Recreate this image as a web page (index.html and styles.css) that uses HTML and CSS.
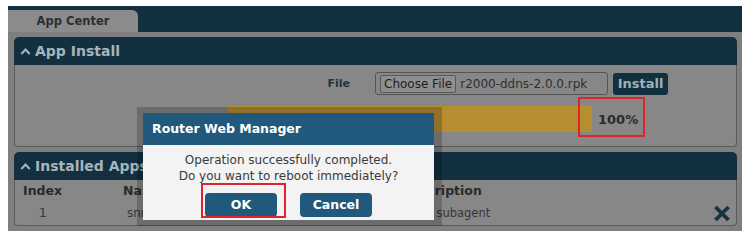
FILE: index.html
```html
<!DOCTYPE html>
<html>
<head>
<meta charset="utf-8">
<link rel="stylesheet" href="styles.css">
</head>
<body>
<div class="page">
  <div class="tabbar"><div class="tab">App Center</div></div>
  <div class="content">
    <section class="panel">
      <div class="panel-head">
        <svg class="chev" width="11" height="7" viewBox="0 0 11 7"><polyline points="1.3,6 5.5,1.6 9.7,6" fill="none" stroke="#a8b4ba" stroke-width="2.2"/></svg>
        <span>App Install</span>
      </div>
      <div class="panel-body install">
        <div class="file-row">
          <span class="file-label">File</span>
          <div class="file-input"><span class="choose">Choose File</span><span class="fname">r2000-ddns-2.0.0.rpk</span></div>
          <span class="btn-install">Install</span>
        </div>
        <div class="progress-row">
          <div class="bar"><div class="fill" style="width:100%"></div></div>
          <span class="pct">100%</span>
        </div>
      </div>
    </section>
    <section class="panel second">
      <div class="panel-head">
        <svg class="chev" width="11" height="7" viewBox="0 0 11 7"><polyline points="1.3,6 5.5,1.6 9.7,6" fill="none" stroke="#a8b4ba" stroke-width="2.2"/></svg>
        <span>Installed Apps</span>
      </div>
      <div class="panel-body apps">
        <div class="apps-table">
          <div class="th c1">Index</div>
          <div class="th c2">Name</div>
          <div class="th c3">Description</div>
          <div class="th c4"></div>
          <div class="td c1 idx">1</div>
          <div class="td c2 nm">snmpd</div>
          <div class="td c3">snmp subagent</div>
          <div class="td c4">
            <svg width="18" height="17" viewBox="0 0 18 17"><path d="M2.5 2 L15.5 15 M15.5 2 L2.5 15" stroke="#17333f" stroke-width="3.8" stroke-linecap="butt"/></svg>
          </div>
        </div>
      </div>
    </section>
  </div>
</div>

<div class="dialog-shadow">
  <div class="dialog">
    <div class="dialog-title">Router Web Manager</div>
    <div class="dialog-body">
      <p class="msg">Operation successfully completed.<br>Do you want to reboot immediately?</p>
      <div class="dialog-buttons">
        <span class="dbtn">OK</span>
        <span class="dbtn">Cancel</span>
      </div>
    </div>
  </div>
</div>
<div class="mark mark-pct"></div>
<div class="mark mark-ok"></div>
</body>
</html>
```
FILE: styles.css
```css
html, body {
  margin: 0;
  padding: 0;
  background: #ffffff;
  font-family: "DejaVu Sans", Verdana, sans-serif;
}
.page {
  margin: 6px 0 0 8px;
  width: 734px;
  background: #7f7f7f;
}
.tabbar {
  height: 26px;
  background: #12303f;
  padding-top: 4px;
  box-sizing: border-box;
}
.tab {
  width: 130px;
  height: 22px;
  background: #8b8b8b;
  border-top-right-radius: 6px;
  color: #2a2f33;
  font-weight: bold;
  font-size: 11.5px;
  line-height: 22px;
  text-align: center;
}
.content {
  padding: 5px 5px 5px 6px;
}
.panel.second {
  margin-top: 5px;
}
.panel-head {
  height: 28px;
  background: #12303f;
  border-radius: 5px 5px 0 0;
  display: flex;
  align-items: center;
  padding-left: 6px;
  color: #a8b4ba;
  font-weight: bold;
  font-size: 14px;
}
.chev {
  margin-right: 4px;
  margin-top: 1px;
}
.panel-body {
  background: #878787;
  border: 1px solid #5a5a5a;
  border-top: none;
  border-radius: 0 0 4px 4px;
  box-sizing: border-box;
}
.install {
  height: 82px;
  padding-top: 7px;
}
.file-row {
  display: flex;
  align-items: center;
  height: 23px;
}
.file-label {
  width: 335px;
  margin-right: 25px;
  text-align: right;
  font-weight: bold;
  font-size: 11px;
  color: #26343c;
}
.file-input {
  width: 233px;
  height: 23px;
  box-sizing: border-box;
  border: 1px solid #555;
  border-radius: 3px;
  display: flex;
  align-items: center;
  padding-left: 4px;
  font-size: 12px;
  color: #2a2a2a;
}
.choose {
  height: 18px;
  box-sizing: border-box;
  border: 1px solid #585858;
  border-radius: 2px;
  background: #8f8f8f;
  padding: 0 3px;
  line-height: 16px;
  color: #1e1e1e;
}
.fname {
  margin-left: 4px;
  color: #2f2f2f;
}
.btn-install {
  margin-left: 5px;
  width: 55px;
  height: 22px;
  background: #12303f;
  border-radius: 3px;
  color: #a0b0b8;
  font-weight: bold;
  font-size: 13px;
  line-height: 22px;
  text-align: center;
}
.progress-row {
  display: flex;
  align-items: center;
  margin-top: 11px;
  margin-left: 213px;
}
.bar {
  width: 364px;
  height: 26px;
}
.fill {
  height: 100%;
  background: #b68e32;
}
.pct {
  margin-left: 6px;
  font-weight: bold;
  font-size: 13px;
  color: #2a2a2a;
}
.apps {
  height: 46px;
}
.apps-table {
  display: grid;
  grid-template-columns: 100px 278px 1fr 30px;
  grid-template-rows: 20px 25px;
  padding-left: 8px;
  align-items: center;
}
.th {
  font-weight: bold;
  font-size: 12.5px;
  color: #2a2a2a;
}
.td {
  font-size: 11.5px;
  color: #363636;
}
.td.idx { padding-left: 16px; font-size: 12px; }
.td.nm { padding-left: 4px; font-size: 12px; }
.td.c4 {
  display: flex;
  justify-content: flex-end;
  padding-right: 5px;
  padding-top: 2px;
}

.dialog-shadow {
  position: absolute;
  left: 137px;
  top: 107px;
  width: 305px;
  height: 119px;
  box-sizing: border-box;
  padding: 6px 8px 6px 6px;
  background: rgba(0, 0, 0, 0.2);
}
.dialog {
  height: 100%;
  background: #f3f3f3;
  display: flex;
  flex-direction: column;
}
.dialog-title {
  height: 32px;
  background: #21597c;
  color: #ffffff;
  font-weight: bold;
  font-size: 12.5px;
  line-height: 32px;
  padding-left: 9px;
}
.dialog-body {
  flex: 1;
  padding-top: 7px;
}
.msg {
  margin: 0;
  text-align: center;
  font-size: 12px;
  line-height: 16px;
  color: #3a3a3a;
}
.dialog-buttons {
  display: flex;
  justify-content: center;
  gap: 23px;
  margin-top: 9px;
}
.dbtn {
  width: 72px;
  height: 24px;
  background: #21597c;
  border-radius: 4px;
  color: #ffffff;
  font-weight: bold;
  font-size: 12.5px;
  line-height: 24px;
  text-align: center;
}
.mark {
  position: absolute;
  border: 2px solid #e0242a;
  box-sizing: border-box;
}
.mark-pct {
  left: 578px;
  top: 97px;
  width: 67px;
  height: 40px;
}
.mark-ok {
  left: 201px;
  top: 183px;
  width: 85px;
  height: 35px;
}
```
